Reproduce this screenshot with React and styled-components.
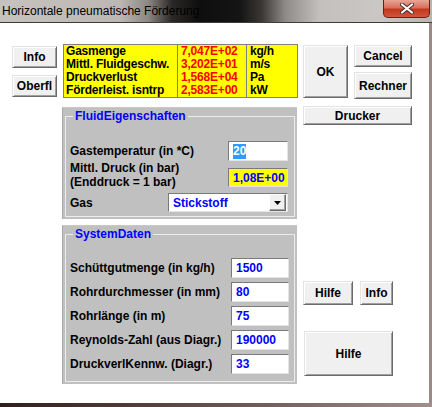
import React from 'react';
import styled, { createGlobalStyle } from 'styled-components';

const GlobalStyle = createGlobalStyle`
    html, body {
        margin: 0;
        padding: 0;
        overflow: hidden;
        background: #ffffff;
    }
`;

const Window = styled.div`
    width: 432px;
    height: 407px;
    display: flex;
    flex-direction: column;
    font-family: "Liberation Sans", Arial, sans-serif;
`;

const TitleBar = styled.div`
    height: 22px;
    display: flex;
    align-items: flex-start;
    border-bottom: 1px solid #3e3b39;
    background: linear-gradient(90deg, #c6c2be 0, #bcb7b2 120px, #8d8884 148px, #2a2826 172px, #0e0e0e 200px, #151515 240px, #3b3836 262px, #8e8a87 285px, #c4c0bd 320px, #cbc7c4 380px, #b9b4b0 432px);
`;

const TitleText = styled.div`
    flex: 1;
    padding-left: 2px;
    line-height: 22px;
    font-size: 12px;
    color: #000;
`;

const CloseButton = styled.div`
    width: 45px;
    height: 17px;
    margin-right: 2px;
    display: flex;
    align-items: center;
    justify-content: center;
    border: 1px solid #5e241a;
    border-top: none;
    border-radius: 0 0 5px 5px;
    background: linear-gradient(180deg, #e9a597 0, #d8705c 45%, #c5381f 55%, #d1553c 100%);
`;

const Client = styled.div`
    flex: 1;
    display: flex;
    background: #ffffff;
    border-right: 3px solid #9c8a86;
`;

const BottomFrame = styled.div`
    height: 4px;
    background: linear-gradient(90deg, #2c201d 0, #4d3a35 120px, #6e5e5a 260px, #a0908d 432px);
`;

const LeftColumn = styled.div`
    width: 45px;
    margin: 23px 0 0 12px;
    display: flex;
    flex-direction: column;
    gap: 7px;
`;

const MiddleColumn = styled.div`
    width: 236px;
    margin: 21px 0 0 5px;
    display: flex;
    flex-direction: column;
`;

const RightColumn = styled.div`
    width: 109px;
    margin: 22px 0 0 5px;
    display: flex;
    flex-direction: column;
`;

const Button = styled.div`
    box-sizing: border-box;
    width: ${p => p.w}px;
    height: ${p => p.h}px;
    margin-left: ${p => p.ml || 0}px;
    display: flex;
    align-items: center;
    justify-content: center;
    background: #f0f0f0;
    border: 1px solid;
    border-color: #e3e3e3 #6a6a6a #6a6a6a #e3e3e3;
    box-shadow: inset 1px 1px 0 #ffffff, inset -1px -1px 0 #a0a0a0;
    font-size: 12px;
    font-weight: bold;
    color: #000;
`;

const ResultTable = styled.div`
    margin-left: 1px;
    width: 235px;
    box-sizing: border-box;
    display: grid;
    grid-template-columns: 113px 69px 1fr;
    grid-auto-rows: 13px;
    background: #ffff00;
    border: 1px solid #808080;
    font-size: 12px;
    font-weight: bold;
    line-height: 13px;
    letter-spacing: -0.2px;
`;

const Cell = styled.div`
    padding-left: ${p => (p.col === 0 ? 2 : 3)}px;
    border-left: ${p => (p.col === 0 ? 'none' : '1px solid #808080')};
    color: ${p => (p.col === 1 ? '#ff0000' : '#000000')};
    white-space: nowrap;
    overflow: hidden;
`;

const Panel = styled.div`
    box-sizing: border-box;
    width: 235px;
    margin-top: ${p => p.top}px;
    background: #c0c0c0;
    border-left: 1px solid #a8a8a8;
    border-top: 1px solid #c8c8c8;
    display: flex;
`;

const Group = styled.fieldset`
    flex: 1;
    margin: 1px 2px 2px 2px;
    padding: ${p => p.pt}px 5px ${p => p.pb}px 4px;
    border: 1px solid #ececec;
    display: flex;
    flex-direction: column;
    gap: ${p => p.gap}px;
    min-width: 0;
`;

const Legend = styled.legend`
    padding: 0 2px;
    margin-left: 3px;
    font-size: 12px;
    font-weight: bold;
    line-height: 14px;
    color: #0000ff;
`;

const Row = styled.div`
    height: ${p => p.h || 20}px;
    margin-top: ${p => p.top || 0}px;
    display: flex;
    align-items: ${p => p.align || 'center'};
    justify-content: space-between;
`;

const Label = styled.div`
    margin-bottom: ${p => p.mb || 0}px;
    font-size: 12px;
    font-weight: bold;
    line-height: 14px;
    color: #000;
    white-space: nowrap;
`;

const Field = styled.div`
    box-sizing: border-box;
    width: ${p => p.w}px;
    height: ${p => p.h || 20}px;
    margin-right: ${p => p.mr || 0}px;
    display: flex;
    align-items: center;
    padding-left: 4px;
    background: ${p => p.bg || '#ffffff'};
    border: 1px solid;
    border-color: #7a7a7a #e4e4e4 #e4e4e4 #7a7a7a;
    font-size: 12px;
    font-weight: bold;
    color: #0000ff;
`;

const Selected = styled.span`
    background: #3399ff;
    color: #ffffff;
    line-height: 15px;
`;

const Select = styled(Field)`
    justify-content: space-between;
    padding-right: 1px;
`;

const DropButton = styled.div`
    box-sizing: border-box;
    width: 17px;
    height: 17px;
    display: flex;
    align-items: center;
    justify-content: center;
    background: #f0f0f0;
    border: 1px solid;
    border-color: #ffffff #6a6a6a #6a6a6a #ffffff;
    box-shadow: inset -1px -1px 0 #a0a0a0;
`;

const ButtonRow = styled.div`
    display: flex;
    gap: ${p => p.gap || 0}px;
    margin-top: ${p => p.top || 0}px;
`;

const ButtonStack = styled.div`
    display: flex;
    flex-direction: column;
    gap: 5px;
`;

const results = [
    ['Gasmenge', '7,047E+02', 'kg/h'],
    ['Mittl. Fluidgeschw.', '3,202E+01', 'm/s'],
    ['Druckverlust', '1,568E+04', 'Pa'],
    ['Förderleist. isntrp', '2,583E+00', 'kW'],
];

const systemRows = [
    ['Schüttgutmenge (in kg/h)', '1500'],
    ['Rohrdurchmesser (in mm)', '80'],
    ['Rohrlänge (in m)', '75'],
    ['Reynolds-Zahl (aus Diagr.)', '190000'],
    ['DruckverlKennw. (Diagr.)', '33'],
];

const App = () => {
    return (
        <>
            <GlobalStyle />
            <Window>
                <TitleBar>
                    <TitleText>Horizontale pneumatische Förderung</TitleText>
                    <CloseButton>
                        <svg width="14" height="11" viewBox="0 0 14 11">
                            <path d="M2 1.5 L12 9.5 M12 1.5 L2 9.5" stroke="#4a2a24" strokeWidth="4" strokeLinecap="round" />
                            <path d="M2 1.5 L12 9.5 M12 1.5 L2 9.5" stroke="#ffffff" strokeWidth="2.2" strokeLinecap="round" />
                        </svg>
                    </CloseButton>
                </TitleBar>
                <Client>
                    <LeftColumn>
                        <Button w={45} h={22}>Info</Button>
                        <Button w={45} h={22}>Oberfl</Button>
                    </LeftColumn>

                    <MiddleColumn>
                        <ResultTable>
                            {results.map((row, index) =>
                                row.map((text, col) => <Cell key={index + '-' + col} col={col}>{text}</Cell>)
                            )}
                        </ResultTable>

                        <Panel top={9}>
                            <Group pt={18} pb={4} gap={3}>
                                <Legend>FluidEigenschaften</Legend>
                                <Row>
                                    <Label>Gastemperatur (in *C)</Label>
                                    <Field w={60} mr={1}><Selected>20</Selected></Field>
                                </Row>
                                <Row h={23} align="flex-end">
                                    <Label mb={-2}>Mittl. Druck (in bar)<br />(Enddruck = 1 bar)</Label>
                                    <Field w={60} h={19} mr={1} bg="#ffff00">1,08E+00</Field>
                                </Row>
                                <Row h={19} top={3}>
                                    <Label>Gas</Label>
                                    <Select w={120} h={19} mr={1}>
                                        Stickstoff
                                        <DropButton>
                                            <svg width="7" height="4" viewBox="0 0 7 4">
                                                <path d="M0 0 H7 L3.5 4 Z" fill="#000" />
                                            </svg>
                                        </DropButton>
                                    </Select>
                                </Row>
                            </Group>
                        </Panel>

                        <Panel top={6}>
                            <Group pt={17} pb={7} gap={4}>
                                <Legend>SystemDaten</Legend>
                                {systemRows.map(([label, value]) =>
                                    <Row key={label}>
                                        <Label>{label}</Label>
                                        <Field w={58}>{value}</Field>
                                    </Row>
                                )}
                            </Group>
                        </Panel>
                    </MiddleColumn>

                    <RightColumn>
                        <ButtonRow gap={6}>
                            <Button w={45} h={53}>OK</Button>
                            <ButtonStack>
                                <Button w={58} h={22}>Cancel</Button>
                                <Button w={58} h={27}>Rechner</Button>
                            </ButtonStack>
                        </ButtonRow>
                        <ButtonRow top={7}>
                            <Button w={109} h={19}>Drucker</Button>
                        </ButtonRow>
                        <ButtonRow gap={7} top={156}>
                            <Button w={50} h={24}>Hilfe</Button>
                            <Button w={33} h={24}>Info</Button>
                        </ButtonRow>
                        <ButtonRow top={26}>
                            <Button w={89} h={45} ml={1}>Hilfe</Button>
                        </ButtonRow>
                    </RightColumn>
                </Client>
                <BottomFrame />
            </Window>
        </>
    );
};

export default App;
